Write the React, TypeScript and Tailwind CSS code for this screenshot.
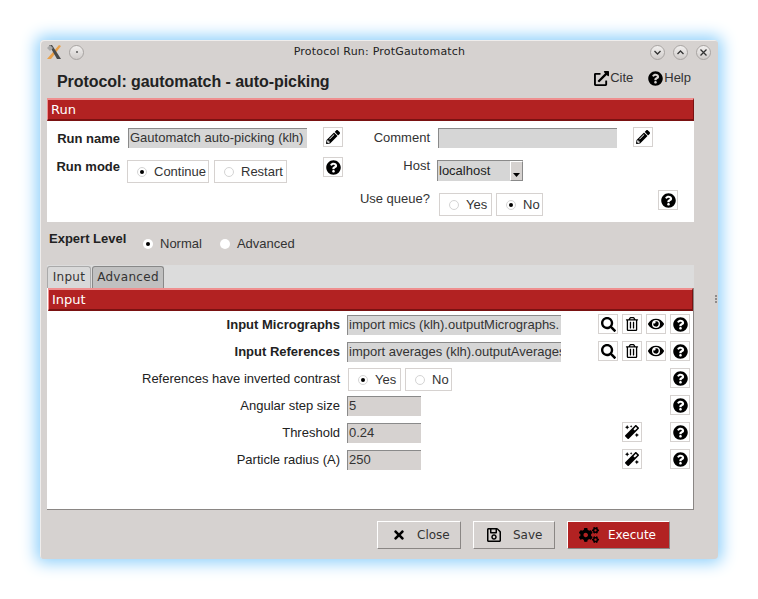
import {FaCogs, FaExternalLinkAlt, FaEye, FaMagic, FaPencilAlt, FaQuestionCircle, FaRegSave, FaRegTrashAlt, FaSearch, FaTimes} from "react-icons/fa";
import type {ReactNode} from "react";

const sans = "font-['Liberation_Sans',Arial,sans-serif]";
const deja = "font-['DejaVu_Sans',sans-serif]";

function IconBtn({children, className = ""}: {children: ReactNode; className?: string}) {
  return (
    <div className={`flex h-[20px] w-[20px] shrink-0 items-center justify-center border border-[#d6d2d0] bg-white text-black ${className}`}>
      {children}
    </div>
  );
}

const Help = ({className = ""}: {className?: string}) => (
  <IconBtn className={className}>
    <FaQuestionCircle size={15} />
  </IconBtn>
);

const Edit = ({className = ""}: {className?: string}) => (
  <IconBtn className={className}>
    <FaPencilAlt size={14} />
  </IconBtn>
);

const Wand = ({className = ""}: {className?: string}) => (
  <IconBtn className={className}>
    <FaMagic size={14} />
  </IconBtn>
);

function Radio({on, onGray}: {on?: boolean; onGray?: boolean}) {
  return (
    <span
      className={`flex h-[10px] w-[10px] shrink-0 items-center justify-center rounded-full ${
        onGray ? "bg-white" : "border border-[#d4d4d4] bg-white"
      }`}
    >
      {on && <span className="h-[4px] w-[4px] rounded-full bg-black" />}
    </span>
  );
}

function RadioBox({label, on, w, className = ""}: {label: string; on?: boolean; w: string; className?: string}) {
  return (
    <div className={`flex h-[23px] shrink-0 items-center border border-[#d6d2d0] bg-white pl-[9px] text-[13px] text-[#333] ${w} ${className}`}>
      <Radio on={on} />
      <span className="ml-[7px] whitespace-nowrap">{label}</span>
    </div>
  );
}

function Entry({value, w, bg = "bg-[#d6d6d6]", className = ""}: {value: string; w: string; bg?: string; className?: string}) {
  return (
    <div className={`h-[20px] shrink-0 overflow-hidden whitespace-nowrap border-t border-l border-[#8a8a8a] pl-[1px] text-[13px] leading-[18px] text-[#333] ${bg} ${w} ${className}`}>
      {value}
    </div>
  );
}

function SectionBar({title}: {title: string}) {
  return (
    <div className={`h-[23px] border-t-2 border-b-2 border-l border-t-[#ef8f8f] border-b-[#7a1212] border-l-[#ef8f8f] border-r border-r-[#7a1212] bg-[#b22222] pl-[3px] text-[13px] leading-[19px] text-white ${deja}`}>
      {title}
    </div>
  );
}

function ParamRow({label, bold, children}: {label: string; bold?: boolean; children: ReactNode}) {
  return (
    <div className="flex h-[27px] items-start">
      <div className={`w-[292px] shrink-0 pt-[6px] text-right text-[13px] leading-[16px] text-[#222] ${bold ? "font-bold" : ""}`}>{label}</div>
      <div className="flex flex-1 items-start pl-[7px] pt-[3px]">{children}</div>
    </div>
  );
}

function BarBtn({icon, label, w, pad, iconW, red, className = ""}: {icon: ReactNode; label: string; w: string; pad: string; iconW: string; red?: boolean; className?: string}) {
  return (
    <div
      className={`flex h-[28px] shrink-0 items-center border border-t-white border-l-white border-r-[#8a8684] border-b-[#8a8684] text-[12px] ${deja} ${w} ${pad} ${
        red ? "border-t-[#e88080] border-l-[#e88080] border-r-[#7a1212] border-b-[#7a1212] bg-[#b22222] text-white" : "bg-[#d6d2d0] text-[#333]"
      } ${className}`}
    >
      <span className={`flex shrink-0 justify-start text-black ${iconW}`}>{icon}</span>
      <span className="ml-[3px]">{label}</span>
    </div>
  );
}

const TitleCircle = ({children}: {children?: ReactNode}) => (
  <div className="flex h-[15px] w-[15px] items-center justify-center rounded-full border border-[#a8a4a2] bg-gradient-to-b from-[#f2f0ef] to-[#d0ccca] text-[#333]">
    {children}
  </div>
);

export default function App() {
  return (
    <div className={`h-[599px] w-[758px] overflow-hidden bg-white pl-[40px] pt-[40px] text-[#222] ${sans}`}>
      <div className="relative h-[519px] w-[678px] rounded-[4px] bg-[#d6d2d0] shadow-[inset_1px_1px_0_#efedec,0_0_16px_4px_#8fd0fb]">
        {/* title bar */}
        <div className="flex h-[24px] items-center pl-[6px] pr-[7px]">
          <svg width="16" height="16" viewBox="0 0 16 16" className="shrink-0">
            <path d="M13 1 L15 2 L5 15 L1 15 Z" fill="#e8a04a" />
            <path d="M3 1 L6 1 L15 15 L11 15 Z" fill="#4a4a4a" />
            <path d="M1 4 L4 1 L7 4 L4 7 Z" fill="#a8a8a8" />
          </svg>
          <div className="ml-[7px]">
            <TitleCircle>
              <span className="h-[2px] w-[2px] rounded-full bg-[#555]" />
            </TitleCircle>
          </div>
          <div className={`flex-1 pl-[25px] text-center text-[11px] tracking-[0.2px] text-[#222] ${deja}`}>Protocol Run: ProtGautomatch</div>
          <div className="flex gap-[8px]">
            <TitleCircle>
              <svg width="9" height="9" viewBox="0 0 9 9" fill="none" stroke="#333" strokeWidth="1.3"><path d="M1.5 3 L4.5 6 L7.5 3" /></svg>
            </TitleCircle>
            <TitleCircle>
              <svg width="9" height="9" viewBox="0 0 9 9" fill="none" stroke="#333" strokeWidth="1.3"><path d="M1.5 6 L4.5 3 L7.5 6" /></svg>
            </TitleCircle>
            <TitleCircle>
              <svg width="9" height="9" viewBox="0 0 9 9" fill="none" stroke="#333" strokeWidth="1.3"><path d="M1.5 1.5 L7.5 7.5 M7.5 1.5 L1.5 7.5" /></svg>
            </TitleCircle>
          </div>
        </div>

        {/* protocol heading */}
        <div className="flex h-[34px] items-center pl-[17px] pr-[27px]">
          <div className="flex-1 pt-[1px] text-[16px] font-bold tracking-[-0.06px] text-[#222]">Protocol: gautomatch - auto-picking</div>
          <div className="mb-[6px] flex items-center text-[13px] text-[#333]">
            <FaExternalLinkAlt size={15} className="text-black" />
            <span className="ml-[1px]">Cite</span>
            <FaQuestionCircle size={15} className="ml-[15px] text-black" />
            <span className="ml-[1px]">Help</span>
          </div>
        </div>

        <div className="ml-[7px] w-[647px]">
          <SectionBar title="Run" />
          <div className="h-[101px] bg-white pt-[6px]">
            <div className="flex h-[30px] items-start">
              <div className="mt-[2px] w-[73px] shrink-0 text-right text-[13px] font-bold">Run name</div>
              <Entry value="Gautomatch auto-picking (klh)" w="w-[179px]" className="ml-[8px] mt-[1px]" />
              <Edit className="ml-[16px]" />
              <div className="mt-[1px] w-[87px] shrink-0 text-right text-[13px] text-[#333]">Comment</div>
              <Entry value="" w="w-[179px]" className="ml-[8px] mt-[1px]" />
              <Edit className="ml-[16px]" />
            </div>
            <div className="flex h-[33px] items-start">
              <div className="w-[73px] shrink-0 text-right text-[13px] font-bold">Run mode</div>
              <RadioBox label="Continue" on w="w-[82px]" className="ml-[7px] mt-[3px]" />
              <RadioBox label="Restart" w="w-[73px]" className="ml-[5px] mt-[3px]" />
              <Help className="ml-[36px]" />
              <div className="mt-[-1px] w-[87px] shrink-0 text-right text-[13px] text-[#333]">Host</div>
              <div className="ml-[7px] mt-[3px] flex h-[21px] w-[86px] shrink-0 border-t border-l border-[#8a8a8a] bg-[#d6d6d6] text-[13px] leading-[19px] text-[#222]">
                <span className="flex-1 pl-[1px]">localhost</span>
                <div className="flex w-[13px] items-end justify-center border border-t-white border-l-white border-r-[#8a8a8a] border-b-[#8a8a8a] bg-[#d6d2d0] pb-[3px]">
                  <svg width="7" height="4" viewBox="0 0 7 4"><path d="M0 0 H7 L3.5 4 Z" fill="#000" /></svg>
                </div>
              </div>
            </div>
            <div className="flex h-[26px] items-start">
              <div className="mt-[-1px] w-[383px] shrink-0 text-right text-[13px] text-[#333]">Use queue?</div>
              <RadioBox label="Yes" w="w-[53px]" className="ml-[9px] mt-[3px]" />
              <RadioBox label="No" on w="w-[47px]" className="ml-[4px] mt-[3px]" />
              <Help className="ml-[115px]" />
            </div>
          </div>
        </div>

        {/* expert level */}
        <div className="flex h-[43px] items-start pl-[9px] pt-[9px]">
          <div className="w-[94px] shrink-0 text-[13px] font-bold leading-[16px]">Expert Level</div>
          <div className="mt-[5px] flex items-center text-[13px] leading-[16px] text-[#333]">
            <Radio on onGray />
            <span className="ml-[7px]">Normal</span>
            <span className="ml-[18px]"><Radio onGray /></span>
            <span className="ml-[7px]">Advanced</span>
          </div>
        </div>

        {/* notebook */}
        <div className="ml-[7px] w-[647px]">
          <div className={`flex h-[23px] items-end bg-[#dcdcdc] text-[12px] tracking-[0.3px] text-[#333] ${deja}`}>
            <div className="h-[22px] w-[44px] rounded-t-[3px] border border-b-0 border-[#aaa] bg-[#d9d9d9] text-center leading-[20px]">Input</div>
            <div className="ml-[1px] h-[22px] w-[72px] rounded-t-[3px] border border-b-0 border-[#888] bg-[#c0c0c0] text-center leading-[20px]">Advanced</div>
          </div>
          <div className="h-[222px] border-r border-b border-[#8a8684] bg-white pl-[1px]">
            <SectionBar title="Input" />
            <div>
              <ParamRow label="Input Micrographs" bold>
                <Entry value="import mics (klh).outputMicrographs." w="w-[214px]" className="mt-[1px]" />
                <div className="ml-[37px] flex gap-[4px]">
                  <IconBtn><FaSearch size={15} /></IconBtn>
                  <IconBtn><FaRegTrashAlt size={14} /></IconBtn>
                  <IconBtn><FaEye size={16} /></IconBtn>
                  <Help />
                </div>
              </ParamRow>
              <ParamRow label="Input References" bold>
                <Entry value="import averages (klh).outputAverages" w="w-[214px]" className="mt-[1px]" />
                <div className="ml-[37px] flex gap-[4px]">
                  <IconBtn><FaSearch size={15} /></IconBtn>
                  <IconBtn><FaRegTrashAlt size={14} /></IconBtn>
                  <IconBtn><FaEye size={16} /></IconBtn>
                  <Help />
                </div>
              </ParamRow>
              <ParamRow label="References have inverted contrast">
                <RadioBox label="Yes" on w="w-[53px]" className="ml-[1px]" />
                <RadioBox label="No" w="w-[47px]" className="ml-[4px]" />
                <Help className="ml-[218px]" />
              </ParamRow>
              <ParamRow label="Angular step size">
                <Entry value="5" w="w-[74px]" bg="bg-[#d6d2d0]" className="mt-[1px]" />
                <Help className="ml-[249px]" />
              </ParamRow>
              <ParamRow label="Threshold">
                <Entry value="0.24" w="w-[74px]" bg="bg-[#d6d2d0]" className="mt-[1px]" />
                <Wand className="ml-[201px]" />
                <Help className="ml-[28px]" />
              </ParamRow>
              <ParamRow label="Particle radius (A)">
                <Entry value="250" w="w-[74px]" bg="bg-[#d6d2d0]" className="mt-[1px]" />
                <Wand className="ml-[201px]" />
                <Help className="ml-[28px]" />
              </ParamRow>
            </div>
          </div>
        </div>

        {/* bottom buttons */}
        <div className="flex pl-[337px] pt-[11px]">
          <BarBtn icon={<FaTimes size={14} />} label="Close" w="w-[84px]" pad="pl-[14px]" iconW="w-[22px]" />
          <BarBtn icon={<FaRegSave size={16} />} label="Save" w="w-[82px]" pad="pl-[12px]" iconW="w-[24px]" className="ml-[12px]" />
          <BarBtn icon={<FaCogs size={20} />} label="Execute" w="w-[103px]" pad="pl-[11px]" iconW="w-[26px]" red className="ml-[12px]" />
        </div>

        {/* sash grip */}
        <div className="absolute right-[1px] top-[255px] flex flex-col gap-[1px]">
          <span className="h-[2px] w-[2px] bg-[#8f8b89]" />
          <span className="h-[2px] w-[2px] bg-[#8f8b89]" />
          <span className="h-[2px] w-[2px] bg-[#8f8b89]" />
        </div>
      </div>
    </div>
  );
}
